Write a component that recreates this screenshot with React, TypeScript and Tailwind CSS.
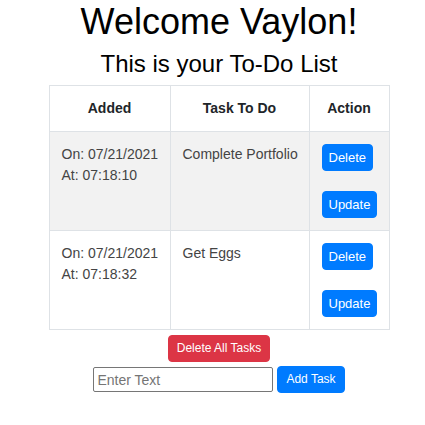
import React from "react";

const tasks = [
  { date: "07/21/2021", time: "07:18:10", text: "Complete Portfolio" },
  { date: "07/21/2021", time: "07:18:32", text: "Get Eggs" },
];

function SmallButton({
  label,
  color,
  big,
}: {
  label: string;
  color: "blue" | "red";
  big?: boolean;
}) {
  const cls =
    color === "blue"
      ? "bg-[#007bff] border-[#007bff]"
      : "bg-[#dc3545] border-[#dc3545]";
  const size = big ? "text-[13px] px-[6px]" : "text-[12px] px-2";
  return (
    <button className={`${cls} ${size} border text-white leading-[25px] rounded-[4px] whitespace-nowrap`}>
      {label}
    </button>
  );
}

export default function App() {
  return (
    <div className="w-full min-h-[425px] bg-white pl-[13px] flex flex-col items-center text-[#212529] font-['Liberation_Sans',Arial,sans-serif]">
      <h1 className="text-[36px] leading-[43px] text-black">Welcome Vaylon!</h1>
      <h2 className="text-[24px] leading-[29px] mt-[6px] text-black">This is your To-Do List</h2>
      <table className="mt-[7px] w-[340px] table-fixed border-collapse text-[14px] leading-[21px]">
        <colgroup>
          <col className="w-[121px]" />
          <col className="w-[139px]" />
          <col className="w-[80px]" />
        </colgroup>
        <thead>
          <tr>
            <th className="border border-[#dee2e6] p-3 font-bold text-center">Added</th>
            <th className="border border-[#dee2e6] p-3 font-bold text-center">Task To Do</th>
            <th className="border border-[#dee2e6] p-3 font-bold text-center">Action</th>
          </tr>
        </thead>
        <tbody>
          {tasks.map((t, i) => (
            <tr key={i} className={i % 2 === 0 ? "bg-[#f2f2f2]" : "bg-white"}>
              <td className="border border-[#dee2e6] py-3 pl-3 pr-0 align-top text-[#444] whitespace-nowrap">
                On: {t.date}
                <br />
                At: {t.time}
              </td>
              <td className="border border-[#dee2e6] py-3 pl-3 pr-0 align-top text-[#444] whitespace-nowrap">
                {t.text}
              </td>
              <td className="border border-[#dee2e6] p-3 align-top">
                <div className="flex flex-col items-start gap-[20px]">
                  <SmallButton label="Delete" color="blue" big />
                  <SmallButton label="Update" color="blue" big />
                </div>
              </td>
            </tr>
          ))}
        </tbody>
      </table>
      <div className="mt-[5px]">
        <SmallButton label="Delete All Tasks" color="red" />
      </div>
      <div className="mt-[4px] flex items-center gap-[4px]">
        <input
          placeholder="Enter Text"
          className="w-[180px] h-[25px] border border-[#767676] rounded-[2px] px-[3px] text-[14px] placeholder:text-[#757575] outline-none"
        />
        <SmallButton label="Add Task" color="blue" />
      </div>
    </div>
  );
}
